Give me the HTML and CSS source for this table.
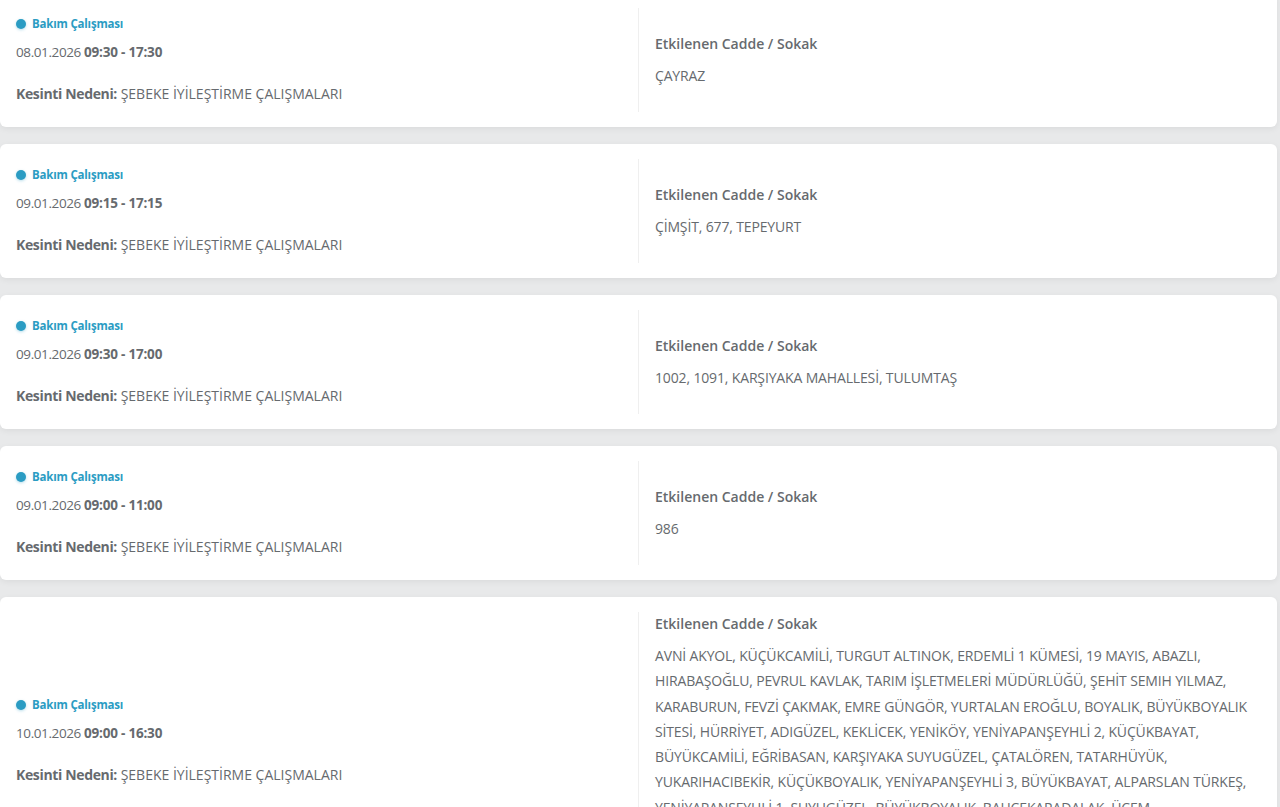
FILE: index.html
```html
<!DOCTYPE html>
<html lang="tr">
<head>
<meta charset="utf-8">
<title>Kesinti Listesi</title>
<link rel="stylesheet" href="styles.css">
</head>
<body>
<div class="list">
  <div class="card">
    <div class="col-left">
      <div class="info">
        <div class="badge"><span class="dot"></span>Bakım Çalışması</div>
        <div class="date">08.01.2026 <b>09:30 - 17:30</b></div>
        <div class="reason"><b>Kesinti Nedeni:</b> ŞEBEKE İYİLEŞTİRME ÇALIŞMALARI</div>
      </div>
    </div>
    <div class="col-right">
      <div class="streets">
        <div class="st-title">Etkilenen Cadde / Sokak</div>
        <div class="st-list">ÇAYRAZ</div>
      </div>
    </div>
  </div>

  <div class="card">
    <div class="col-left">
      <div class="info">
        <div class="badge"><span class="dot"></span>Bakım Çalışması</div>
        <div class="date">09.01.2026 <b>09:15 - 17:15</b></div>
        <div class="reason"><b>Kesinti Nedeni:</b> ŞEBEKE İYİLEŞTİRME ÇALIŞMALARI</div>
      </div>
    </div>
    <div class="col-right">
      <div class="streets">
        <div class="st-title">Etkilenen Cadde / Sokak</div>
        <div class="st-list">ÇİMŞİT, 677, TEPEYURT</div>
      </div>
    </div>
  </div>

  <div class="card">
    <div class="col-left">
      <div class="info">
        <div class="badge"><span class="dot"></span>Bakım Çalışması</div>
        <div class="date">09.01.2026 <b>09:30 - 17:00</b></div>
        <div class="reason"><b>Kesinti Nedeni:</b> ŞEBEKE İYİLEŞTİRME ÇALIŞMALARI</div>
      </div>
    </div>
    <div class="col-right">
      <div class="streets">
        <div class="st-title">Etkilenen Cadde / Sokak</div>
        <div class="st-list">1002, 1091, KARŞIYAKA MAHALLESİ, TULUMTAŞ</div>
      </div>
    </div>
  </div>

  <div class="card">
    <div class="col-left">
      <div class="info">
        <div class="badge"><span class="dot"></span>Bakım Çalışması</div>
        <div class="date">09.01.2026 <b>09:00 - 11:00</b></div>
        <div class="reason"><b>Kesinti Nedeni:</b> ŞEBEKE İYİLEŞTİRME ÇALIŞMALARI</div>
      </div>
    </div>
    <div class="col-right">
      <div class="streets">
        <div class="st-title">Etkilenen Cadde / Sokak</div>
        <div class="st-list">986</div>
      </div>
    </div>
  </div>

  <div class="card">
    <div class="col-left">
      <div class="info">
        <div class="badge"><span class="dot"></span>Bakım Çalışması</div>
        <div class="date">10.01.2026 <b>09:00 - 16:30</b></div>
        <div class="reason"><b>Kesinti Nedeni:</b> ŞEBEKE İYİLEŞTİRME ÇALIŞMALARI</div>
      </div>
    </div>
    <div class="col-right">
      <div class="streets">
        <div class="st-title">Etkilenen Cadde / Sokak</div>
        <div class="st-list">AVNİ AKYOL, KÜÇÜKCAMİLİ, TURGUT ALTINOK, ERDEMLİ 1 KÜMESİ, 19 MAYIS, ABAZLI, HIRABAŞOĞLU, PEVRUL KAVLAK, TARIM İŞLETMELERİ MÜDÜRLÜĞÜ, ŞEHİT SEMIH YILMAZ, KARABURUN, FEVZİ ÇAKMAK, EMRE GÜNGÖR, YURTALAN EROĞLU, BOYALIK, BÜYÜKBOYALIK SİTESİ, HÜRRİYET, ADIGÜZEL, KEKLİCEK, YENİKÖY, YENİYAPANŞEYHLİ 2, KÜÇÜKBAYAT, BÜYÜKCAMİLİ, EĞRİBASAN, KARŞIYAKA SUYUGÜZEL, ÇATALÖREN, TATARHÜYÜK, YUKARIHACIBEKİR, KÜÇÜKBOYALIK, YENİYAPANŞEYHLİ 3, BÜYÜKBAYAT, ALPARSLAN TÜRKEŞ, YENİYAPANŞEYHLİ 1, SUYUGÜZEL, BÜYÜKBOYALIK, BAHÇEKARADALAK, ÜÇEM, AŞAĞIHACIBEKİRKÖYÜ, KARŞIYAKA, YENİYAPANŞEYHLİ, ÇAYRAZ, TEPEYURT, ÇİMŞİT, TULUMTAŞ, HACIBEKİR, ALTINOVA, KAVAKLI, ÇAMLICA, YEŞİLYURT</div>
      </div>
    </div>
  </div>
</div>
</body>
</html>
```

FILE: styles.css
```css
html, body {
  margin: 0;
  padding: 0;
  background: #e8e9ea;
}

body {
  font-family: "Open Sans", "Liberation Sans", sans-serif;
  color: #666a6e;
  overflow: hidden;
}

.list {
  display: flex;
  flex-direction: column;
  gap: 17px;
  margin-top: -7px;
  padding-right: 3px;
}

.card {
  display: flex;
  background: #ffffff;
  border-radius: 6px;
  padding: 15px 0;
  box-shadow: 0 2px 6px rgba(0, 0, 0, 0.06);
}

.col-left {
  flex: 0 0 638px;
  display: flex;
  align-items: center;
  padding-left: 16px;
  box-sizing: border-box;
  min-height: 104px;
}

.col-right {
  flex: 1;
  display: flex;
  align-items: center;
  border-left: 1px solid #efefef;
  padding: 0 15px 0 16px;
}

.badge {
  display: flex;
  align-items: center;
  gap: 6px;
  font-size: 11.5px;
  font-weight: 700;
  letter-spacing: -0.2px;
  line-height: 18px;
  color: #2b9cc3;
}

.dot {
  width: 10px;
  height: 10px;
  border-radius: 50%;
  background: #2b9cc3;
  box-shadow: 0 1px 3px rgba(43, 156, 195, 0.35);
}

.date {
  margin-top: 7px;
  font-size: 13.5px;
  letter-spacing: -0.4px;
  line-height: 24px;
}

.date b {
  font-weight: 700;
  letter-spacing: -0.2px;
}

.reason {
  margin-top: 18px;
  font-size: 14px;
  line-height: 24px;
}

.reason b {
  font-weight: 700;
  letter-spacing: -0.35px;
}

.st-title {
  font-size: 14px;
  font-weight: 600;
  line-height: 24px;
}

.st-list {
  margin-top: 7px;
  font-size: 14px;
  letter-spacing: -0.15px;
  line-height: 25.3px;
}
```
